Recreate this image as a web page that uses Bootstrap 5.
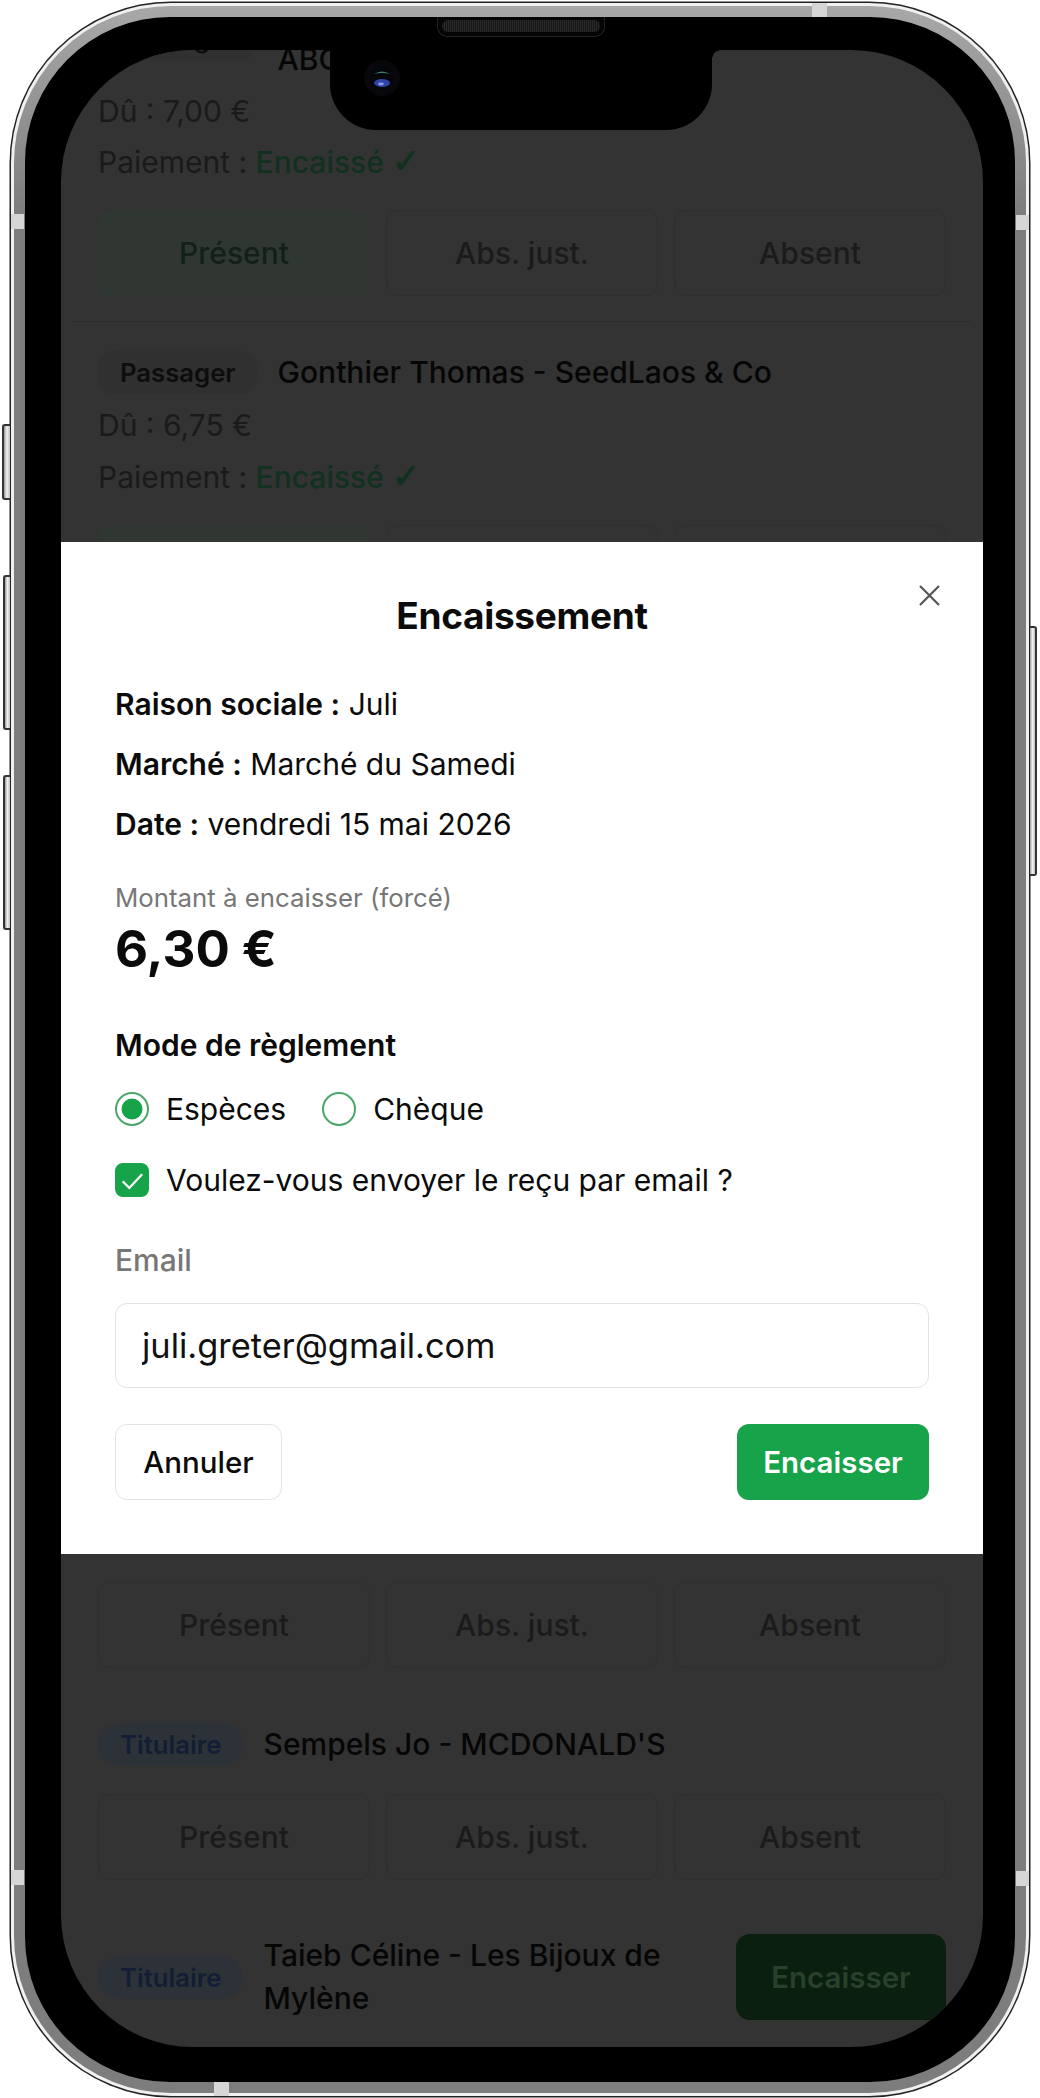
<!DOCTYPE html>
<html lang="fr">
<head>
<meta charset="utf-8">
<title>Encaissement</title>
<link href="https://cdn.jsdelivr.net/npm/bootstrap@5.3.0/dist/css/bootstrap.min.css" rel="stylesheet">
<style>
html,body{height:2098px;margin:0;overflow:hidden;background:#fff;font-family:Inter,"Liberation Sans",sans-serif}
.device{position:relative;width:1040px;height:2098px;padding:3px 11px}
.shell{height:2093px;padding:11px;border:3px solid #f0f0f0;border-radius:160px;background-color:#7d7d7d;background-image:linear-gradient(180deg,#a8a8a8 0,#7d7d7d 10%);box-shadow:0 0 0 1.5px #222}
.bezel{position:relative;height:100%;padding:33px 32px 36px 36px;background:#000;border-radius:145px}
.screen{display:flex;flex-direction:column;height:1997px;background:#333;border-radius:132px;overflow:hidden}
.pane-top{height:492px;overflow:hidden;padding:0 37px;flex:none}
.pane-bottom{flex:1;overflow:hidden;padding:28px 37px 0}
.first-row{margin-top:-55px}
.name{font-size:30px;line-height:43px;font-weight:500;color:#060606}
.tag{flex:none;font-size:25.7px;line-height:43px;font-weight:600;padding:0 21px 0 22px;border-radius:16px;background:#303030;color:#0d0d0d}
.tag-blue{background:#2d3238;color:#131d33;border-radius:22px}
.meta{font-size:30px;line-height:43px;color:#1a1a1a}
.meta-gap{margin-top:9px}
.meta-gap-b{margin-top:10px}
.paid{color:#12301f;font-weight:500}
.tick{font-family:"DejaVu Sans",sans-serif;font-size:34px;line-height:0;-webkit-text-stroke:.9px #12301f}
.paid-row{margin-top:9px}
.paid-row-a{margin-top:8px}
.choices{display:grid;grid-template-columns:repeat(3,1fr);gap:16px}
.choice{height:86px;display:flex;align-items:center;justify-content:center;font-size:30px;font-weight:500;color:#1b1b1b;border:1px solid #2f2f2f;border-radius:12px}
.choice-on{background:#303733;color:#122018;border-color:#303733}
.gap-top{margin-top:26px}
.sep{margin:25px -25px 29px;height:1px;background:#2c2c2c}
.gap-low{margin-top:28px}
.row-a{margin-top:55px}
.row-b{margin-top:54px}
.pay-btn{flex:none;width:210px;height:86px;display:flex;align-items:center;justify-content:center;margin-left:auto;background:#0a1f0f;color:#29402d;border-radius:14px;font-size:29.5px;font-weight:600}
.name-wrap{gap:21px}
.sheet.modal-content{flex:none;height:1012px;background:#fff;border:0;border-radius:0;padding:51px 54px 0;position:relative;color:#0b0b0b;display:block}
.sheet-title{font-size:37px;line-height:46px;font-weight:700;text-align:center;margin:0;letter-spacing:-.3px}
.sheet-close{position:absolute;top:43px;right:43px;width:21px;height:21px;padding:0;border:0;background:none;display:block}
.sheet-close svg{display:block}
.info{font-size:30px;line-height:40px;margin-top:20px}
.info b{font-weight:600}
.info-first{margin-top:45px}
.amount-label{font-size:25.8px;line-height:36px;color:#777;margin-top:36px}
.amount{font-size:51px;line-height:66px;font-weight:700}
.mode{font-size:30px;line-height:40px;font-weight:600;margin-top:43px}
.radios{margin-top:24px;height:40px}
.opt{display:flex;align-items:center;height:40px;margin:0;padding:0;font-size:30px;color:#0b0b0b}
.opt .form-check-input{width:34px;height:34px;margin:0 17px 0 0;float:none;flex:none;border:2px solid #4aa76a;background-color:#fff}
.opt .form-check-input[type=radio]:checked{background-color:#fff;background-image:radial-gradient(circle,#16a34a 10px,#fff 10.8px);border-color:#4aa76a}
.opt .form-check-input[type=checkbox]{border-radius:8px}
.opt .form-check-input[type=checkbox]:checked{background-color:#16a34a;border-color:#16a34a;background-size:100%;background-image:url("data:image/svg+xml,%3csvg xmlns='http://www.w3.org/2000/svg' viewBox='0 0 34 34'%3e%3cpath fill='none' stroke='%23fff' stroke-width='2.6' d='M6.5 18.5l7.5 7.5L28.5 10.5'/%3e%3c/svg%3e")}
.radio-gap{gap:36px}
.check-row{margin-top:31px}
.email-label{display:block;font-size:30px;line-height:36px;font-weight:500;color:#777;margin:42px 0 0}
.email-input.form-control{height:85px;margin-top:25px;padding:0 26px;font-size:34.4px;color:#111;border:1.5px solid #e3e3e3;border-radius:12px;background:#fff}
.actions{margin-top:36px}
.btn-cancel.btn,.btn-pay.btn{height:76px;display:flex;align-items:center;justify-content:center;font-size:29.5px;border-radius:12px;padding:0}
.btn-cancel.btn{width:167px;background:#fff;color:#0b0b0b;border:1.5px solid #e3e3e3;font-weight:500}
.btn-pay.btn{width:192px;background:#16a34a;color:#fff;border:0;font-weight:600}
.notch{position:absolute;left:305px;top:33px;width:382px;height:80px;background:#000;border-radius:0 0 46px 46px}
.notch::after{content:"";position:absolute;left:100%;top:0;width:9px;height:9px;background:radial-gradient(circle at 100% 100%,transparent 8.5px,#000 9px)}
.speaker{position:absolute;left:412px;top:0;width:168px;height:20px;background:#050505;border:1px solid #222;border-top:0;border-radius:0 0 10px 10px;padding:3px 4px 4px}
.speaker i{display:block;height:100%;border-radius:7px;background:repeating-linear-gradient(90deg,#2a2a2a 0 1px,#161616 1px 2px)}
.cam{position:absolute;left:339px;top:43px;width:36px;height:36px}
.key{position:absolute;background:linear-gradient(90deg,#9a9a9a,#f1f1f1 50%,#bdbdbd);border:2px solid #333}
.key-l{border-right:0;border-radius:3px 0 0 3px}
.key-r{left:1030px;top:626px;width:7px;height:250px;border-left:0;border-radius:0 3px 3px 0}
.key-1{left:2px;top:424px;width:8px;height:76px}
.key-2{left:3px;top:575px;width:7px;height:155px}
.key-3{left:3px;top:775px;width:7px;height:155px}
.ant{position:absolute;background:#d6d6d6}
.ant-v{width:13px;height:15px}
.ant-h{width:15px;height:14px}
.ant-a{left:11px;top:214px}.ant-b{left:11px;top:1870px}.ant-c{left:1016px;top:215px}.ant-d{left:1016px;top:1871px}.ant-e{left:812px;top:3px}.ant-f{left:214px;top:2082px}
</style>
</head>
<body>
<div class="device">
  <span class="key key-l key-1"></span><span class="key key-l key-2"></span><span class="key key-l key-3"></span><span class="key key-r"></span>
  <div class="shell">
    <div class="bezel">
      <div class="screen">
        <section class="pane-top">
          <div class="d-flex align-items-center name-wrap first-row">
            <span class="tag">Passager</span>
            <span class="name">Martin Paul -<br>ABC Bio</span>
          </div>
          <div class="meta meta-gap">Dû : 7,00 €</div>
          <div class="meta paid-row-a">Paiement : <span class="paid">Encaissé <span class="tick">✓</span></span></div>
          <div class="choices gap-top">
            <div class="choice choice-on">Présent</div><div class="choice">Abs. just.</div><div class="choice">Absent</div>
          </div>
          <div class="sep"></div>
          <div class="d-flex align-items-center name-wrap">
            <span class="tag">Passager</span>
            <span class="name">Gonthier Thomas - SeedLaos &amp; Co</span>
          </div>
          <div class="meta meta-gap-b">Dû : 6,75 €</div>
          <div class="meta paid-row">Paiement : <span class="paid">Encaissé <span class="tick">✓</span></span></div>
          <div class="choices gap-top">
            <div class="choice choice-on">Présent</div><div class="choice">Abs. just.</div><div class="choice">Absent</div>
          </div>
        </section>

        <section class="sheet modal-content">
          <h2 class="sheet-title">Encaissement</h2>
          <button type="button" class="sheet-close" aria-label="Fermer">
            <svg width="21" height="21" viewBox="0 0 21 21"><path d="M1 1l19 19M20 1L1 20" stroke="#555" stroke-width="2.2" fill="none"/></svg>
          </button>
          <div class="info info-first"><b>Raison sociale :</b> Juli</div>
          <div class="info"><b>Marché :</b> Marché du Samedi</div>
          <div class="info"><b>Date :</b> vendredi 15 mai 2026</div>
          <div class="amount-label">Montant à encaisser (forcé)</div>
          <div class="amount">6,30 €</div>
          <div class="mode">Mode de règlement</div>
          <div class="d-flex radios radio-gap">
            <label class="opt form-check"><input class="form-check-input" type="radio" name="pay" checked>Espèces</label>
            <label class="opt form-check"><input class="form-check-input" type="radio" name="pay">Chèque</label>
          </div>
          <label class="opt form-check check-row"><input class="form-check-input" type="checkbox" checked>Voulez-vous envoyer le reçu par email ?</label>
          <label class="email-label" for="mail">Email</label>
          <input id="mail" class="form-control email-input" type="text" value="juli.greter@gmail.com">
          <div class="d-flex justify-content-between actions">
            <button type="button" class="btn btn-cancel">Annuler</button>
            <button type="button" class="btn btn-pay">Encaisser</button>
          </div>
        </section>

        <section class="pane-bottom">
          <div class="choices">
            <div class="choice">Présent</div><div class="choice">Abs. just.</div><div class="choice">Absent</div>
          </div>
          <div class="d-flex align-items-center name-wrap row-a">
            <span class="tag tag-blue">Titulaire</span>
            <span class="name">Sempels Jo - MCDONALD'S</span>
          </div>
          <div class="choices gap-low">
            <div class="choice">Présent</div><div class="choice">Abs. just.</div><div class="choice">Absent</div>
          </div>
          <div class="d-flex align-items-center name-wrap row-b">
            <span class="tag tag-blue">Titulaire</span>
            <span class="name">Taieb Céline - Les Bijoux de Mylène</span>
            <span class="pay-btn">Encaisser</span>
          </div>
        </section>
      </div>
      <div class="notch"></div>
      <div class="speaker"><i></i></div>
      <svg class="cam" viewBox="0 0 36 36" aria-hidden="true">
        <circle cx="18" cy="18" r="18" fill="#08080c"/>
        <circle cx="18" cy="18" r="12" fill="#05060a"/>
        <path d="M10 14q8-5 16 0q-8-2-16 0z" fill="#3c7f6c"/>
        <ellipse cx="18" cy="23" rx="8" ry="4" fill="#2f42a8"/>
        <ellipse cx="17" cy="24" rx="3" ry="1.4" fill="#8f9ae0"/>
      </svg>
    </div>
  </div>
  <span class="ant ant-v ant-a"></span><span class="ant ant-v ant-b"></span><span class="ant ant-v ant-c"></span><span class="ant ant-v ant-d"></span><span class="ant ant-h ant-e"></span><span class="ant ant-h ant-f"></span>
</div>
<script src="https://cdn.jsdelivr.net/npm/bootstrap@5.3.0/dist/js/bootstrap.bundle.min.js"></script>
</body>
</html>
